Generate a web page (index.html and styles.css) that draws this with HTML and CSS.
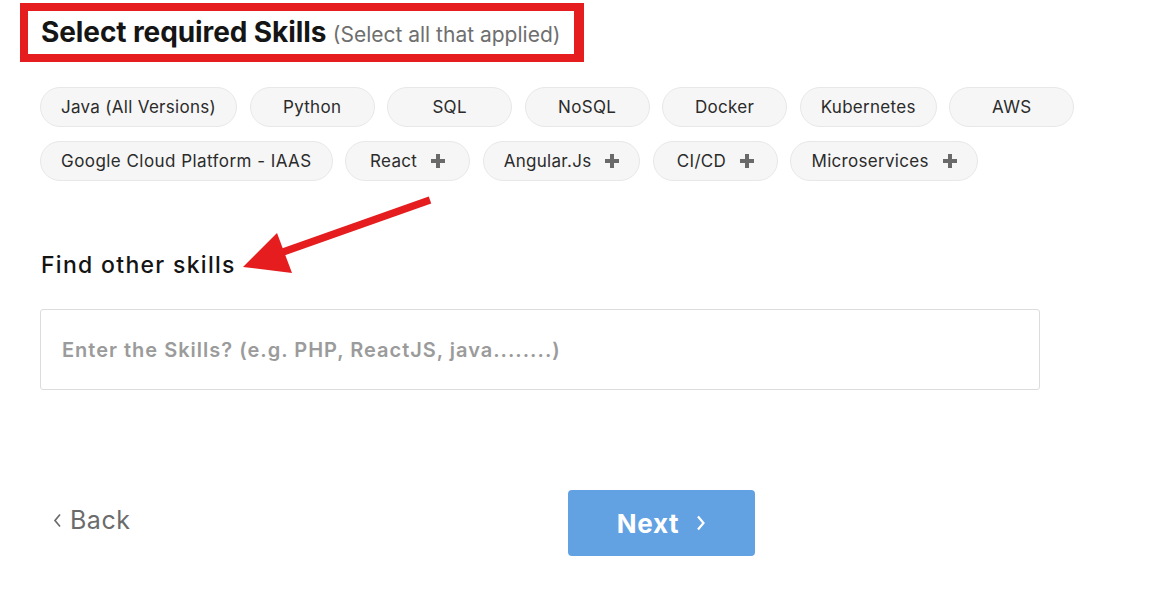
FILE: index.html
```html
<!DOCTYPE html>
<html lang="en">
<head>
<meta charset="utf-8">
<title>Select required Skills</title>
<link rel="stylesheet" href="styles.css">
</head>
<body>
<main class="page">
  <header class="title-wrap">
    <h1 class="title">Select required Skills <span class="subtitle">(Select all that applied)</span></h1>
  </header>

  <section class="chips">
    <button class="chip">Java (All Versions)</button>
    <button class="chip">Python</button>
    <button class="chip">SQL</button>
    <button class="chip">NoSQL</button>
    <button class="chip">Docker</button>
    <button class="chip">Kubernetes</button>
    <button class="chip">AWS</button>
    <button class="chip chip-wide">Google Cloud Platform - IAAS</button>
    <button class="chip">React <span class="plus"></span></button>
    <button class="chip">Angular.Js <span class="plus"></span></button>
    <button class="chip">CI/CD <span class="plus"></span></button>
    <button class="chip">Microservices <span class="plus"></span></button>
  </section>

  <h2 class="find">Find other skills</h2>

  <div class="search">
    <input class="search-input" type="text" placeholder="Enter the Skills? (e.g. PHP, ReactJS, java........)">
  </div>

  <nav class="actions">
    <a class="back" href="#"><svg class="back-icon" viewBox="0 0 9 15" width="9" height="15"><path d="M7 1.5 L2 7.5 L7 13.5" fill="none" stroke="#6b6b6b" stroke-width="1.7"/></svg>Back</a>
    <button class="next">Next <svg class="next-icon" viewBox="0 0 10 16" width="10" height="16"><path d="M2 1.5 L7.5 8 L2 14.5" fill="none" stroke="#fff" stroke-width="2.2"/></svg></button>
  </nav>

  <svg class="annotation-arrow" width="200" height="90" viewBox="0 0 200 90">
    <line x1="187" y1="10" x2="40" y2="62" stroke="#e51d1f" stroke-width="7.5"/>
    <polygon points="0,77 34,43 49,83" fill="#e51d1f"/>
  </svg>
</main>
</body>
</html>
```

FILE: styles.css
```css
* { box-sizing: border-box; }

body {
  margin: 0;
  background: #ffffff;
  font-family: "Inter", "Noto Sans", sans-serif;
  color: #1a1a1a;
}

.page {
  position: relative;
  width: 1176px;
  height: 593px;
  padding: 3px 0 0 20px;
}

.title-wrap {
  display: inline-block;
  border: 8px solid #e51d1f;
  border-right-width: 10px;
  padding: 0 14px 0 13px;
  height: 59px;
}

.title {
  margin: 0;
  font-size: 28px;
  line-height: 42px;
  font-weight: 700;
  letter-spacing: -0.1px;
  color: #151515;
  white-space: nowrap;
}

.subtitle {
  font-size: 21px;
  font-weight: 400;
  letter-spacing: 0px;
  color: #6f6f6f;
}

.chips {
  display: flex;
  flex-wrap: wrap;
  gap: 14px 12.5px;
  width: 1060px;
  margin: 25px 0 0 20px;
}

.chip {
  display: inline-flex;
  align-items: center;
  justify-content: center;
  gap: 14px;
  height: 40px;
  min-width: 125px;
  padding: 0 20px;
  border: 1px solid #e8e8e8;
  border-radius: 20px;
  background: #f6f6f6;
  font-family: inherit;
  font-size: 17px;
  letter-spacing: 0.3px;
  color: #2b2b2b;
  cursor: pointer;
}

.chip-wide { letter-spacing: 0.45px; }

.plus {
  position: relative;
  width: 14px;
  height: 14px;
}
.plus::before,
.plus::after {
  content: "";
  position: absolute;
  background: #6a6a6a;
}
.plus::before { left: 0; top: 5px; width: 14px; height: 4px; }
.plus::after { left: 5px; top: 0; width: 4px; height: 14px; }

.find {
  margin: 70px 0 0 21px;
  font-size: 23px;
  line-height: 28px;
  font-weight: 500;
  letter-spacing: 1.3px;
  color: #141414;
}

.search {
  margin: 30px 0 0 20px;
  width: 1000px;
}

.search-input {
  width: 100%;
  height: 81px;
  padding: 0 21px;
  border: 1px solid #dcdcdc;
  border-radius: 3px;
  font-family: inherit;
  font-size: 20px;
  font-weight: 600;
  letter-spacing: 1px;
  color: #333;
  outline: none;
}
.search-input::placeholder { color: #9b9b9b; }

.actions {
  display: grid;
  grid-template-columns: 515px 187px;
  align-items: center;
  margin: 100px 0 0 33px;
}

.back {
  display: inline-flex;
  align-items: center;
  gap: 8px;
  margin-top: -6px;
  font-size: 25px;
  letter-spacing: 0.5px;
  color: #6b6b6b;
  text-decoration: none;
}

.next {
  display: flex;
  align-items: center;
  justify-content: center;
  gap: 17px;
  height: 66px;
  border: none;
  border-radius: 4px;
  background: #62a2e3;
  color: #fff;
  font-family: inherit;
  font-size: 26px;
  font-weight: 700;
  letter-spacing: 0.7px;
  cursor: pointer;
}

.annotation-arrow {
  position: absolute;
  left: 243px;
  top: 190px;
}
```
